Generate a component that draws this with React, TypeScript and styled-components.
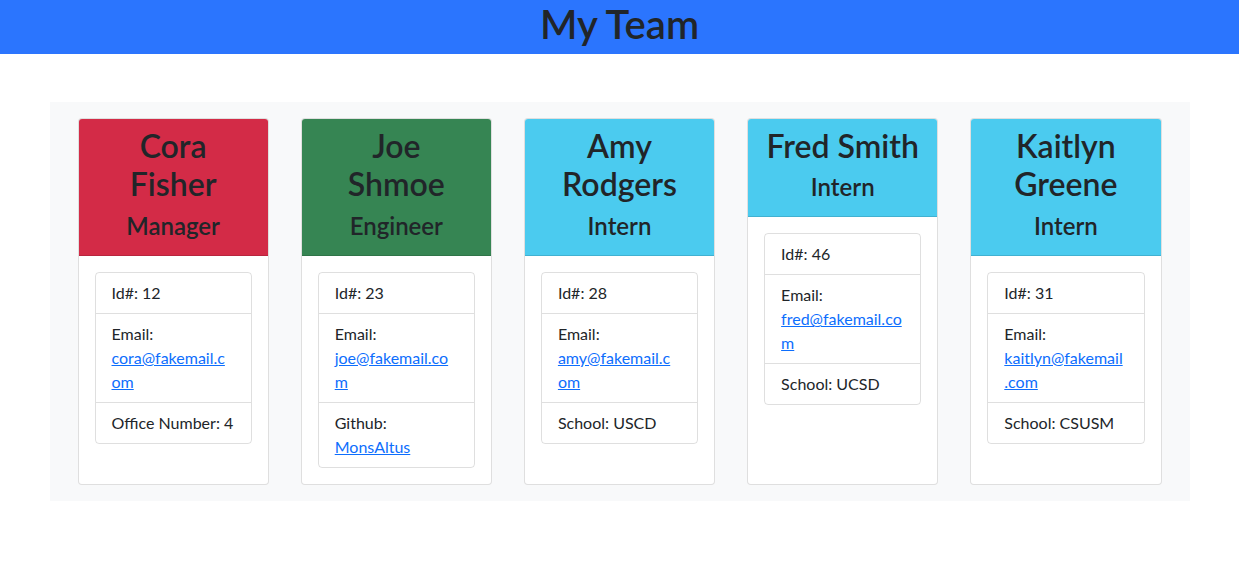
import React from "react";
import styled, { createGlobalStyle } from "styled-components";

const Global = createGlobalStyle`
  * { box-sizing: border-box; }
  body {
    margin: 0;
    font-family: "Lato", "Noto Sans", sans-serif;
    color: #212529;
    background: #fff;
    font-size: 16px;
    line-height: 1.5;
  }
`;

const TopBar = styled.header`
  background: #2b75fe;
  height: 54px;
  padding-bottom: 6px;
`;

const Title = styled.h1`
  margin: 0;
  font-size: 40px;
  line-height: 48px;
  font-weight: 600;
  text-align: center;
  color: #212529;
`;

const Container = styled.main`
  width: 1140px;
  margin: 48px auto 0;
  background: #f8f9fa;
  padding: 16px 28px 16px;
  display: flex;
  gap: 32px;
  align-items: stretch;
`;

const Card = styled.section`
  flex: 1 1 0;
  min-width: 0;
  background: #fff;
  border: 1px solid rgba(0, 0, 0, 0.125);
  border-radius: 4px;
  display: flex;
  flex-direction: column;
`;

const CardHeader = styled.div<{ $bg: string }>`
  background: ${(p) => p.$bg};
  padding: 8px 16px;
  text-align: center;
  border-bottom: 1px solid rgba(0, 0, 0, 0.125);
  border-radius: 3px 3px 0 0;
`;

const Name = styled.h2`
  margin: 0 0 8px;
  font-size: 32px;
  line-height: 1.2;
  font-weight: 600;
`;

const NamePart = styled.span<{ $block: boolean }>`
  display: ${(p) => (p.$block ? "block" : "inline")};
`;

const Role = styled.h4`
  margin: 0 0 6px;
  font-size: 24px;
  line-height: 1.2;
  font-weight: 600;
`;

const CardBody = styled.div`
  padding: 16px;
  flex: 1;
`;

const List = styled.ul`
  list-style: none;
  margin: 0;
  padding: 0;
  border: 1px solid rgba(0, 0, 0, 0.125);
  border-radius: 4px;
`;

const Item = styled.li<{ $tight?: boolean }>`
  padding: 8px ${(p) => (p.$tight ? "18px" : "16px")} 8px 16px;
  & + & {
    border-top: 1px solid rgba(0, 0, 0, 0.125);
  }
  overflow-wrap: anywhere;
`;

const Link = styled.a`
  color: #0d6efd;
  text-decoration: underline;
`;

type Member = {
  first: string;
  last: string;
  stacked: boolean;
  role: string;
  id: number;
  email: string;
  extraLabel: string;
  extra: string;
  extraLink?: boolean;
  color: string;
};

const team: Member[] = [
  { first: "Cora", last: "Fisher", stacked: true, role: "Manager", id: 12, email: "cora@fakemail.com", extraLabel: "Office Number", extra: "4", color: "#d32b47" },
  { first: "Joe", last: "Shmoe", stacked: true, role: "Engineer", id: 23, email: "joe@fakemail.com", extraLabel: "Github", extra: "MonsAltus", extraLink: true, color: "#368553" },
  { first: "Amy", last: "Rodgers", stacked: true, role: "Intern", id: 28, email: "amy@fakemail.com", extraLabel: "School", extra: "USCD", color: "#4bcbef" },
  { first: "Fred", last: "Smith", stacked: false, role: "Intern", id: 46, email: "fred@fakemail.com", extraLabel: "School", extra: "UCSD", color: "#4bcbef" },
  { first: "Kaitlyn", last: "Greene", stacked: true, role: "Intern", id: 31, email: "kaitlyn@fakemail.com", extraLabel: "School", extra: "CSUSM", color: "#4bcbef" },
];

export default function App() {
  return (
    <>
      <Global />
      <TopBar>
        <Title>My Team</Title>
      </TopBar>
      <Container>
        {team.map((m) => (
          <Card key={m.id}>
            <CardHeader $bg={m.color}>
              <Name>
                <NamePart $block={m.stacked}>{m.first}</NamePart>{" "}
                <NamePart $block={m.stacked}>{m.last}</NamePart>
              </Name>
              <Role>{m.role}</Role>
            </CardHeader>
            <CardBody>
              <List>
                <Item>Id#: {m.id}</Item>
                <Item $tight>
                  Email: <Link href={`mailto:${m.email}`}>{m.email}</Link>
                </Item>
                <Item>
                  {m.extraLabel}:{" "}
                  {m.extraLink ? <Link href="#">{m.extra}</Link> : m.extra}
                </Item>
              </List>
            </CardBody>
          </Card>
        ))}
      </Container>
    </>
  );
}
